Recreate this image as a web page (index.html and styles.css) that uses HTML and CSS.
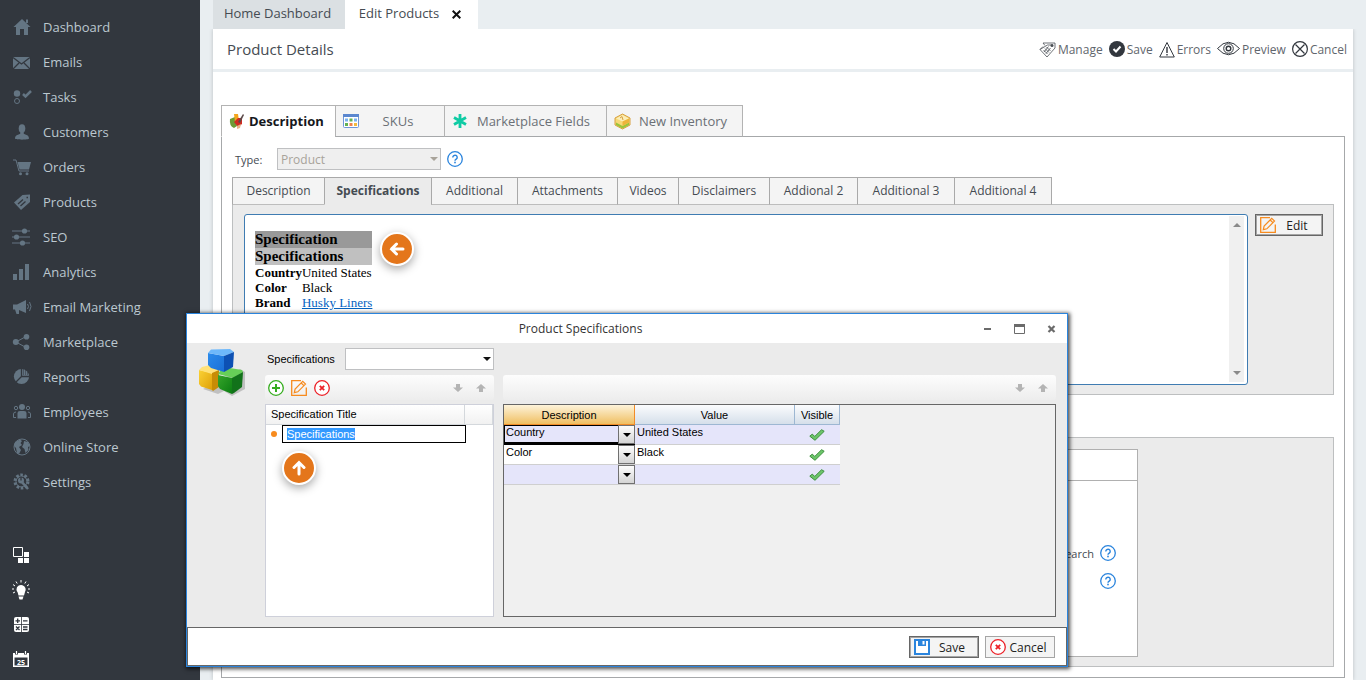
FILE: index.html
```html
<!DOCTYPE html>
<html lang="en">
<head>
    <meta charset="UTF-8">
    <title>Edit Products</title>
    <link rel="stylesheet" href="styles.css">
</head>
<body>

<!-- shared icons -->
<svg class="sprite" width="0" height="0">
    <symbol id="help" viewBox="0 0 16 16">
        <circle cx="8" cy="8" r="7.3" fill="#fff" stroke="#2a84dd" stroke-width="1.3"/>
        <path d="M5.8 6.4a2.2 2.1 0 1 1 3.4 1.7c-.8.5-1.2.8-1.2 1.7" fill="none" stroke="#2a84dd" stroke-width="1.4"/>
        <rect x="7.2" y="10.7" width="1.6" height="1.6" fill="#2a84dd"/>
    </symbol>
    <symbol id="pencil" viewBox="0 0 16 16">
        <path d="M10 .7H.7v14.6h14.6V7.5" fill="none" stroke="#f78b1e" stroke-width="1.3"/>
        <path d="M3.3 12.7l.8-3.6 7.6-7.7 2.8 2.7-7.7 7.7zM10.2 3l2.7 2.7" fill="none" stroke="#f78b1e" stroke-width="1.2"/>
    </symbol>
    <symbol id="remove" viewBox="0 0 16 16">
        <circle cx="8" cy="8" r="7.3" fill="#fff" stroke="#ec2027" stroke-width="1.3"/>
        <path d="M5.8 5.8l4.400 4.400M10.200 5.800l-4.400 4.400" stroke="#ec2027" stroke-width="1.8"/>
    </symbol>
    <symbol id="down" viewBox="0 0 10 8">
        <path d="M3 0h4v3.5h3L5 8 0 3.5h3z" fill="#b4b4b4"/>
    </symbol>
    <symbol id="up" viewBox="0 0 10 8">
        <path d="M3 8h4V4.5h3L5 0 0 4.5h3z" fill="#b4b4b4"/>
    </symbol>
    <symbol id="check" viewBox="0 0 16 12">
        <path d="M.8 7.2l2.400-2 2.600 2.200L12.600.700l2.600 1.600L6 11.300z" fill="#6cc46a" stroke="#3b8f3d" stroke-width="1"/>
    </symbol>
</svg>

<aside class="sidebar">
    <nav class="menu">
        <a href="#"><svg width="20" height="18" viewBox="0 0 20 18"><path d="M10 1l8.500 8H16v8h-4v-6H8v6H4V9H1.500zM14 1.500h2V5h-2z"/></svg>Dashboard</a>
        <a href="#"><svg width="20" height="18" viewBox="0 0 20 18"><path d="M1 4h17v12H1z"/><path class="cut" d="M1 4.500l8.500 6.500L18 4.500M1 16l6-6M18 16l-6-6"/></svg>Emails</a>
        <a href="#"><svg width="20" height="18" viewBox="0 0 20 18"><circle cx="5" cy="5.500" r="3.200"/><circle class="line" cx="5" cy="13" r="2.500"/><path class="thick" d="M11 6l2.500 2.500L19 3"/></svg>Tasks</a>
        <a href="#"><svg width="20" height="18" viewBox="0 0 20 18"><ellipse cx="10" cy="5.500" rx="3.300" ry="4.300"/><path d="M8.300 8h3.400v3H8.300z"/><path d="M3 15.500c0-4 4-3.500 5.500-5h3c1.500 1.500 5.500 1 5.500 5 0 1.500-14 1.500-14 0z"/></svg>Customers</a>
        <a href="#"><svg width="20" height="18" viewBox="0 0 20 18"><path class="line" d="M1 2h3l3 11h10"/><path d="M5.500 4H19l-2 7.500H7.500z"/><circle cx="8.500" cy="15.800" r="1.500"/><circle cx="15" cy="15.800" r="1.500"/></svg>Orders</a>
        <a href="#"><svg width="20" height="18" viewBox="0 0 20 18"><path d="M2 9.500L10.500 2 18 1.500V9l-9 8z"/><path class="cut" d="M6 11l5-4.500M8.500 13l5-4.500M14.500 4.500h1.500"/></svg>Products</a>
        <a href="#"><svg width="20" height="18" viewBox="0 0 20 18"><path class="line" d="M0 3h18M0 9h18M0 15h18"/><circle cx="12.500" cy="3" r="2.600"/><circle cx="4.500" cy="9" r="2.600"/><circle cx="10.500" cy="15" r="2.600"/></svg>SEO</a>
        <a href="#"><svg width="20" height="18" viewBox="0 0 20 18"><path d="M1 11h4v6H1zM7 6h4v11H7zM13 1h4v16h-4z"/></svg>Analytics</a>
        <a href="#"><svg width="20" height="18" viewBox="0 0 20 18"><path d="M1 6.500h4L14 2v13l-7-3v4H4.500L3 11.500H1z"/><path class="line" d="M15.500 6q2 2.500 0 5M17.500 4q3 4.500 0 9"/></svg>Email Marketing</a>
        <a href="#"><svg width="20" height="18" viewBox="0 0 20 18"><path class="line" d="M14 3.500L4 9l10 5.500"/><circle cx="3.800" cy="9" r="3"/><circle cx="14.500" cy="3.800" r="2.800"/><circle cx="14.500" cy="14.200" r="2.800"/></svg>Marketplace</a>
        <a href="#"><svg width="20" height="18" viewBox="0 0 20 18"><circle cx="9.500" cy="8.500" r="7.600"/><path class="cut" d="M9.500 1v7.500H17M9.500 8.500L4 14"/><path class="cut dots" d="M11 4h5M11 6h6M11 2h3"/></svg>Reports</a>
        <a href="#"><svg width="20" height="18" viewBox="0 0 20 18"><circle cx="10" cy="4" r="3"/><path d="M5.500 15.500V10q0-2 2.500-2h4q2.500 0 2.500 2v5.500z"/><circle class="line" cx="4" cy="5" r="1.700"/><circle class="line" cx="16" cy="5" r="1.700"/><path class="line" d="M4 14.500H1.500V11q0-2 2.500-2M16 14.500h2.500V11q0-2-2.500-2"/></svg>Employees</a>
        <a href="#"><svg width="20" height="18" viewBox="0 0 20 18"><circle class="line" cx="10" cy="9" r="8"/><path d="M3 4l5-2.500 2 1.500-1.500 2L10 7 7 9l2 3-2 4-2-1-1-5-2-2zM12 3l4 1 2 4-2 1 .500 3-3 3-1-4-2.500-2 1.500-3z"/></svg>Online Store</a>
        <a href="#"><svg width="20" height="18" viewBox="0 0 20 18"><circle class="gear" cx="9.500" cy="8.500" r="6.500"/><circle class="line" cx="9.500" cy="8.500" r="5.500"/><path class="thick" d="M9 8l7 8"/><circle cx="9" cy="7.500" r="3"/><path class="cut" d="M9 7.500V3.500"/></svg>Settings</a>
    </nav>
    <div class="tools">
        <a href="#" aria-label="Windows"><svg width="20" height="20" viewBox="0 0 20 20"><path d="M1.500 2.500h9v9h-9z" fill="none" stroke="#fff"/><path d="M12 7h5v5h-5zM6 13h5v5H6zM12 13h5v5h-5z" fill="#fff"/></svg></a>
        <a href="#" aria-label="Tips"><svg width="20" height="20" viewBox="0 0 20 20"><path d="M4.500 9.500a4.600 4.600 0 1 1 8.500 2.500l-1 3.500H6.500l-1-3.500q-1-1-1-2.500zM6.500 16.500h5l-1 3h-3z" fill="#fff"/><path d="M0 9h2M16 9h2M9 0v2.500M4 1.500l1.200 2M14 1.500l-1.200 2M1 4.500L3 6M17 4.500L15 6M1 13l2-1M17 13l-2-1" stroke="#fff"/></svg></a>
        <a href="#" aria-label="Calculator"><svg width="20" height="20" viewBox="0 0 20 20"><rect x="2" y="2" width="15" height="15" rx="2" fill="#fff"/><path d="M9.500 2v15M2 9.500h15" stroke="#32373e" stroke-width=".8"/><path d="M3.500 5.800h4.500M5.700 3.500V8M11 5.800h4.500M4 11.500l3.500 3.500M7.500 11.500L4 15M11 12h4.500M11 14.500h4.500" stroke="#32373e" stroke-width="1.300"/></svg></a>
        <a href="#" aria-label="Calendar"><svg width="20" height="20" viewBox="0 0 20 20"><path d="M1 3h16v14H1z" fill="#fff"/><path d="M2.500 7.500h13v8h-13z" fill="#32373e"/><path d="M4.500 1v3.500M13.500 1v3.500" stroke="#32373e" stroke-width="3"/><path d="M4.500 1v3M13.500 1v3" stroke="#fff" stroke-width="1.200"/><text x="9" y="14.500" text-anchor="middle" class="day">25</text></svg></a>
    </div>
</aside>

<main class="main">
    <div class="page-tabs">
        <a href="#" class="page-tab">Home Dashboard</a>
        <a href="#" class="page-tab active">Edit Products
            <svg width="9" height="9" viewBox="0 0 9 9"><path d="M.700.700l7.600 7.600M8.300.700L.700 8.300" stroke="#111" stroke-width="2"/></svg>
        </a>
    </div>

    <div class="page">
        <header class="page-header">
            <h1>Product Details</h1>
            <div class="actions">
                <button><svg width="17" height="17" viewBox="0 0 17 17"><g fill="none" stroke="#4a4f55" stroke-width=".8"><path d="M1 8.500L4 5.500M4 2h12v5l-8 9-7-7.500L8.500 4H14"/><path d="M4 2l2 2.500"/><path d="M4.500 9l4 4M6 7.500l4 4M7.500 6l4 4M9.500 5.500L5 11M11.500 7L7 12.500"/></g><circle cx="13" cy="4.500" r="1.500" fill="#4a4f55"/></svg>Manage</button>
                <button><svg width="16" height="16" viewBox="0 0 16 16"><circle cx="8" cy="8" r="8" fill="#32373e"/><path d="M4.500 8l2.500 2.500L11.500 5.500" fill="none" stroke="#fff" stroke-width="2"/></svg>Save</button>
                <button><svg width="16" height="17" viewBox="0 0 16 17"><path d="M8 1.500l7.300 14.500H.7z" fill="none" stroke="#32373e"/><path d="M8 6v6M8 13v1.500" stroke="#32373e" stroke-width="1.400"/></svg>Errors</button>
                <button><svg width="23" height="16" viewBox="0 0 23 16"><path d="M.5 7.500Q11.500-5 22.500 7.500 11.500 20 .5 7.500z" fill="none" stroke="#32373e"/><circle cx="11.500" cy="7.500" r="4.800" fill="none" stroke="#32373e"/><circle cx="11.500" cy="7.500" r="2.300" fill="none" stroke="#32373e" stroke-width="1.400"/></svg>Preview</button>
                <button><svg width="16" height="16" viewBox="0 0 16 16"><circle cx="8" cy="8" r="7.400" fill="none" stroke="#32373e" stroke-width="1.200"/><path d="M3.500 3.500l9 9M12.500 3.500l-9 9" stroke="#32373e" stroke-width="1.200"/></svg>Cancel</button>
            </div>
        </header>

        <div class="content">
            <div class="main-tabs">
                <a href="#" class="active"><svg width="16" height="16" viewBox="0 0 16 16"><path d="M1 6l5-2 2 9-3 2q-5-2-4-9z" fill="#6d9a36"/><path d="M5 1l4 0 1 7-4 1z" fill="#f4a51c"/><path d="M5 9l4-4 4 0v6l-4 3z" fill="#cf2b22"/><path d="M9 9l5-8 1 1-4 8z" fill="#5b4a4a"/><path d="M8 13l4-2-1 4-3 1z" fill="#e7b588"/></svg>Description</a>
                <a href="#"><svg width="16" height="14" viewBox="0 0 16 14"><rect x=".5" y=".5" width="15" height="13" rx="1" fill="#fff" stroke="#6f96d6"/><path d="M0 0h16v3H0z" fill="#5b87cf"/><path d="M2 4.500h3v3H2z" fill="#7bb2ee"/><path d="M6.500 4.500h3v3h-3zM2 9h3v3H2z" fill="#62b152"/><path d="M11 4.500h3v3h-3z" fill="#7bb2ee"/><path d="M6.500 9h3v3h-3z" fill="#f1824a"/><path d="M11 9h3v3h-3z" fill="#f2ba3e"/></svg><span>SKUs</span></a>
                <a href="#"><svg width="16" height="14" viewBox="0 0 16 14"><path d="M8 0v14M2 3.500l12 7M14 3.500l-12 7" stroke="#0fcba4" stroke-width="2.800"/></svg><span>Marketplace Fields</span></a>
                <a href="#"><svg width="17" height="17" viewBox="0 0 17 17"><path d="M8.500 1L16 5v7l-7.500 4L1 12V5z" fill="#f7d976" stroke="#d7a041"/><path d="M2 9.500l6.500 3.500L15 9.500V12l-6.500 3.500L2 12z" fill="#9bc53a"/><path d="M2 5.500l6.500 3 6.500-3-6.500-3.500z" fill="#fbeeb9"/><path d="M8.500 8.500V13L15 9.500v-4z" fill="#edb43a"/><path d="M6 5l2-1.500L9 7" stroke="#d7a041" fill="none"/></svg><span>New Inventory</span></a>
            </div>

            <section class="main-panel">
                <div class="type-row">
                    <label for="type">Type:</label>
                    <span class="select disabled">
                        <select id="type" disabled><option>Product</option></select>
                    </span>
                    <svg width="16" height="16"><use href="#help"/></svg>
                </div>

                <div class="sub-tabs">
                    <a href="#">Description</a>
                    <a href="#" class="active">Specifications</a>
                    <a href="#">Additional</a>
                    <a href="#">Attachments</a>
                    <a href="#">Videos</a>
                    <a href="#">Disclaimers</a>
                    <a href="#">Addional 2</a>
                    <a href="#">Additional 3</a>
                    <a href="#">Additional 4</a>
                </div>

                <div class="panel sub-panel">
                    <div class="editor">
                        <div class="document">
                            <table>
                                <tr class="group"><th colspan="2">Specification</th></tr>
                                <tr class="title"><th colspan="2">Specifications</th></tr>
                                <tr><th>Country</th><td>United States</td></tr>
                                <tr><th>Color</th><td>Black</td></tr>
                                <tr><th>Brand</th><td><a href="#">Husky Liners</a></td></tr>
                            </table>
                            <span class="marker marker-left"><svg width="16" height="14" viewBox="0 0 16 14"><path d="M14 7H2.500M7.500 2L2.500 7l5 5"/></svg></span>
                        </div>
                        <div class="scrollbar">
                            <i class="arrow-up"></i>
                            <i class="arrow-down"></i>
                        </div>
                    </div>
                    <button class="btn default edit"><svg width="16" height="16"><use href="#pencil"/></svg><span>Edit</span></button>
                </div>

                <div class="panel lower-panel">
                    <div class="card">
                        <div class="card-head"></div>
                        <div class="card-body">
                            <div class="card-row">Search<svg width="16" height="16"><use href="#help"/></svg></div>
                            <div class="card-row"><svg width="16" height="16"><use href="#help"/></svg></div>
                        </div>
                    </div>
                </div>
            </section>
        </div>
    </div>
</main>

<div class="dialog" role="dialog" aria-labelledby="dialog-title">
    <div class="dialog-bar">
        <h2 id="dialog-title">Product Specifications</h2>
        <div class="window-buttons">
            <button aria-label="Minimize"><svg width="11" height="10" viewBox="0 0 11 10"><path d="M2 5h7" stroke="#6b6b6b" stroke-width="2"/></svg></button>
            <button aria-label="Maximize"><svg width="11" height="10" viewBox="0 0 11 10"><path d="M.5.500h10v9H.500z" fill="none" stroke="#6b6b6b"/><path d="M0 0h11v3H0z" fill="#6b6b6b"/></svg></button>
            <button aria-label="Close"><svg width="11" height="10" viewBox="0 0 11 10"><path d="M2.500 2l6 6M8.500 2l-6 6" stroke="#6b6b6b" stroke-width="2.200"/></svg></button>
        </div>
    </div>

    <div class="dialog-body">
        <svg class="cubes" width="48" height="48" viewBox="0 0 48 48">
            <defs>
                <linearGradient id="blue" x2="1" y2="1"><stop offset="0" stop-color="#2b8bec"/><stop offset="1" stop-color="#1a6fd6"/></linearGradient>
                <linearGradient id="yellow" x2="1" y2="1"><stop offset="0" stop-color="#fbd235"/><stop offset="1" stop-color="#dea008"/></linearGradient>
                <linearGradient id="green" x2="1" y2="1"><stop offset="0" stop-color="#36a52a"/><stop offset="1" stop-color="#0b7d12"/></linearGradient>
            </defs>
            <path d="M5 41l15 5 6-3 8 5 13-7V24l-5-3" fill="#000" opacity=".18"/>
            <path d="M1 22l13 3v17L3 38.500 1 36z" fill="url(#yellow)"/>
            <path d="M1 22l3-3 8-2 9 3v3l-7 3z" fill="#ffe27a"/>
            <path d="M14 25l7-3v17l-6 4-1-1z" fill="#c78c06"/>
            <path d="M20 27l14 3v16L22 41l-2-3z" fill="url(#green)"/>
            <path d="M20 26l2-3 10-3 12 2 1 2-10 6z" fill="#67cf58"/>
            <path d="M34 30l11-6-1 15-8 6-2 1z" fill="#12721a"/>
            <path d="M10 5l16 3v16l-13-4-3-3z" fill="url(#blue)"/>
            <path d="M10 5l3-3.500L32 1l4 3-10 4z" fill="#6db8fb"/>
            <path d="M26 8l10-4-1 15-9 5z" fill="#0d51b4"/>
        </svg>

        <div class="list-column">
            <div class="picker">
                <label for="spec">Specifications</label>
                <span class="select">
                    <select id="spec"><option></option></select>
                </span>
            </div>
            <div class="toolbar">
                <button aria-label="Add"><svg width="16" height="16" viewBox="0 0 16 16"><circle cx="8" cy="8" r="7.300" fill="#fff" stroke="#35ad1e" stroke-width="1.300"/><path d="M8 4v8M4 8h8" stroke="#35ad1e" stroke-width="2"/></svg></button>
                <button aria-label="Edit"><svg width="16" height="16"><use href="#pencil"/></svg></button>
                <button aria-label="Delete"><svg width="16" height="16"><use href="#remove"/></svg></button>
                <button aria-label="Move down" class="push"><svg width="10" height="8"><use href="#down"/></svg></button>
                <button aria-label="Move up"><svg width="10" height="8"><use href="#up"/></svg></button>
            </div>
            <div class="list">
                <div class="list-head"><span>Specification Title</span><span></span></div>
                <div class="list-row">
                    <i class="bullet"></i>
                    <label class="name-box"><input type="text" value="Specifications" aria-label="Specification title"></label>
                </div>
                <span class="marker marker-up"><svg width="14" height="16" viewBox="0 0 14 16"><path d="M7 14V2.500M2 7.500l5-5 5 5"/></svg></span>
            </div>
        </div>

        <div class="grid-column">
            <div class="toolbar">
                <button aria-label="Move down" class="push"><svg width="10" height="8"><use href="#down"/></svg></button>
                <button aria-label="Move up"><svg width="10" height="8"><use href="#up"/></svg></button>
            </div>
            <div class="grid">
                <table>
                    <thead>
                        <tr><th class="sorted">Description</th><th>Value</th><th>Visible</th></tr>
                    </thead>
                    <tbody>
                        <tr>
                            <td class="current"><div class="combo"><span>Country</span><button aria-label="Open"></button></div></td>
                            <td>United States</td>
                            <td class="tick"><svg width="16" height="12"><use href="#check"/></svg></td>
                        </tr>
                        <tr>
                            <td><div class="combo"><span>Color</span><button aria-label="Open"></button></div></td>
                            <td>Black</td>
                            <td class="tick"><svg width="16" height="12"><use href="#check"/></svg></td>
                        </tr>
                        <tr>
                            <td><div class="combo"><span></span><button aria-label="Open"></button></div></td>
                            <td></td>
                            <td class="tick"><svg width="16" height="12"><use href="#check"/></svg></td>
                        </tr>
                    </tbody>
                </table>
            </div>
        </div>
    </div>

    <div class="dialog-footer">
        <button class="btn default"><svg width="16" height="16" viewBox="0 0 16 16"><path d="M1 1h14v14H1z" fill="#fff" stroke="#2a84dd" stroke-width="2"/><path d="M4 1h8v6H4z" fill="#2a84dd"/><path d="M8.500 2h2v3.500h-2z" fill="#fff"/></svg><span>Save</span></button>
        <button class="btn"><svg width="16" height="16"><use href="#remove"/></svg><span>Cancel</span></button>
    </div>
</div>

</body>
</html>
```
FILE: styles.css
```css
* {
    box-sizing: border-box;
}
body {
    background: #e9eef1;
    color: #454b52;
    display: flex;
    font-family: "Open Sans", "Noto Sans", sans-serif;
    font-size: 12px;
    margin: 0;
    min-height: 100vh;
}
a {
    color: inherit;
    text-decoration: none;
}
button {
    background: none;
    border: 0;
    color: inherit;
    font: inherit;
    padding: 0;
}
svg {
    display: block;
    flex: none;
}
.sprite {
    position: absolute;
}

/* sidebar */
.sidebar {
    background: #32373e;
    display: flex;
    flex: 0 0 200px;
    flex-direction: column;
    justify-content: space-between;
    padding: 9px 0 3px 12px;
}
.menu a {
    align-items: center;
    color: #bcc8d0;
    display: flex;
    font-size: 13px;
    font-weight: 500;
    gap: 11px;
    height: 35px;
}
.menu svg {
    fill: #647583;
}
.menu .line, .menu .thick, .menu .cut, .menu .gear {
    fill: none;
    stroke: #647583;
}
.menu .thick {
    stroke-width: 2.5;
}
.menu .cut {
    stroke: #32373e;
    stroke-width: 1.3;
}
.menu .dots {
    stroke-dasharray: 1 1;
    stroke-width: 1;
}
.menu .gear {
    stroke-dasharray: 2.5 1.6;
    stroke-width: 3;
}
.tools a {
    align-items: center;
    display: flex;
    height: 35px;
}
.day {
    fill: #fff;
    font-size: 7px;
    font-weight: bold;
}

/* page */
.main {
    display: flex;
    flex: 1;
    flex-direction: column;
    padding: 0 13px;
}
.page-tabs {
    display: flex;
    font-size: 13px;
    height: 29px;
}
.page-tab {
    align-items: center;
    background: #dbe0e3;
    display: flex;
    justify-content: center;
    padding: 0 3px 3px 0;
    width: 132px;
}
.page-tab.active {
    background: #fff;
    gap: 13px;
    width: 133px;
}
.page-tab svg {
    margin-top: 3px;
}
.page {
    background: #fff;
    box-shadow: 0 0 4px rgba(0, 0, 0, .2);
    clip-path: inset(0 -6px);
    flex: 1;
}
.page-header {
    align-items: center;
    border-bottom: 3px solid #e9eef1;
    display: flex;
    height: 43px;
    justify-content: space-between;
    padding: 0 6px 0 14px;
}
.page-header h1 {
    font-size: 15px;
    font-weight: normal;
    margin: 0;
}
.actions {
    color: #5f666d;
    display: flex;
    gap: 6px;
}
.actions button {
    align-items: center;
    display: flex;
    gap: 2px;
}
.content {
    padding: 33px 8px 2px;
}
.main-tabs {
    display: flex;
    font-size: 13px;
}
.main-tabs a {
    align-items: center;
    background: #f4f4f4;
    border: 1px solid #b3b3b3;
    border-bottom-color: #a6a8aa;
    color: #6b7076;
    display: flex;
    height: 32px;
    margin: 0 -1px -1px 0;
    padding: 0 7px;
    width: 110px;
}
.main-tabs a span {
    flex: 1;
    text-align: center;
}
.main-tabs a.active {
    background: #fff;
    border-bottom-color: #fff;
    color: #15181c;
    font-weight: bold;
    gap: 4px;
    width: 115px;
}
.main-tabs a:nth-child(3) {
    width: 163px;
}
.main-tabs a:nth-child(4) {
    width: 137px;
}
.main-panel {
    border: 1px solid #a6a8aa;
    padding: 11px 10px 10px;
}
.type-row {
    align-items: center;
    display: flex;
    height: 22px;
    padding-left: 3px;
}
.type-row label {
    font-size: 11px;
    width: 42px;
}
.type-row svg {
    margin-left: 6px;
}
.select {
    display: block;
    height: 22px;
    position: relative;
    width: 164px;
}
.select select {
    appearance: none;
    background: #fff;
    border: 1px solid #bfc0c2;
    border-radius: 0;
    font: inherit;
    height: 100%;
    padding: 0 3px;
    width: 100%;
}
.select::after {
    border: 4px solid transparent;
    border-bottom: 0;
    border-top-color: #111;
    content: "";
    position: absolute;
    right: 3px;
    top: 9px;
}
.select.disabled select {
    background: #efefef;
    color: #a8a39a;
    opacity: 1;
}
.select.disabled::after {
    border-top-color: #a8a39a;
}
.sub-tabs {
    display: flex;
    margin-top: 7px;
}
.sub-tabs a {
    background: #f4f4f4;
    border: 1px solid #a9a9a9;
    border-bottom-color: #bdbdbd;
    height: 28px;
    line-height: 26px;
    margin: 0 -1px -1px 0;
    text-align: center;
    width: 98px;
}
.sub-tabs a.active {
    background: #ebebeb;
    border-bottom-color: #ebebeb;
    font-weight: bold;
}
.sub-tabs a:nth-child(1) { width: 93px; }
.sub-tabs a:nth-child(2) { width: 108px; }
.sub-tabs a:nth-child(3) { width: 87px; }
.sub-tabs a:nth-child(4) { width: 101px; }
.sub-tabs a:nth-child(5) { width: 62px; }
.sub-tabs a:nth-child(6) { width: 92px; }
.sub-tabs a:nth-child(7) { width: 89px; }
.panel {
    background: #ebebeb;
    border: 1px solid #bdbfc0;
    padding: 9px 10px 9px 11px;
}
.sub-panel {
    align-items: flex-start;
    display: flex;
    gap: 7px;
}
.editor {
    background: #fff;
    border: 1px solid #3f7cb2;
    border-radius: 3px;
    display: flex;
    flex: 1;
    height: 171px;
}
.document {
    color: #000;
    flex: 1;
    font-family: "Liberation Serif", serif;
    font-size: 13px;
    line-height: 15px;
    padding: 16px 10px;
    position: relative;
}
.document table {
    border-collapse: collapse;
}
.document td, .document th {
    padding: 0;
    text-align: left;
}
.document .group, .document .title {
    font-size: 15px;
    line-height: 17px;
}
.document .group {
    background: #999;
}
.document .title {
    background: #c0c0c0;
}
.document a {
    color: #0563c1;
    text-decoration: underline;
}
.scrollbar {
    align-items: center;
    background: #f0f0f0;
    display: flex;
    flex-direction: column;
    justify-content: space-between;
    margin: 1px 3px 2px 0;
    padding: 7px 0;
    width: 15px;
}
.arrow-up, .arrow-down {
    border: 4px solid transparent;
}
.arrow-up {
    border-bottom-color: #8a8a8a;
    border-top: 0;
}
.arrow-down {
    border-bottom: 0;
    border-top-color: #8a8a8a;
}
.marker {
    align-items: center;
    background: #e4761b;
    border: 2px solid #fff;
    border-radius: 50%;
    box-shadow: 0 3px 10px rgba(0, 0, 0, .35);
    display: flex;
    height: 34px;
    justify-content: center;
    position: absolute;
    width: 34px;
}
.marker path {
    fill: none;
    stroke: #fff;
    stroke-linecap: round;
    stroke-width: 3;
}
.marker-left {
    left: 135px;
    top: 17px;
}
.marker-up {
    left: 16px;
    top: 46px;
}
.btn {
    align-items: center;
    background: #f4f4f4;
    border: 1px solid #a5a5a5;
    color: #222;
    display: flex;
    height: 22px;
    padding: 0 4px;
    width: 70px;
}
.btn span {
    flex: 1;
    text-align: center;
}
.btn.default {
    border-color: #666;
    box-shadow: inset 0 0 0 1px #a5a5a5;
}
.btn.edit {
    width: 68px;
}
.lower-panel {
    margin-top: 42px;
    padding-top: 11px;
}
.card {
    background: #fff;
    border: 1px solid #b0b0b0;
    margin-right: 185px;
}
.card-head {
    border-bottom: 1px solid #b0b0b0;
    height: 31px;
}
.card-body {
    font-size: 11px;
    padding: 58px 21px 61px;
}
.card-row {
    align-items: center;
    display: flex;
    gap: 6px;
    height: 28px;
    justify-content: flex-end;
}

/* dialog */
.dialog {
    background: #ebebeb;
    border: 1px solid #2a84dd;
    box-shadow: 1px 1px 4px 1px rgba(0, 0, 0, .7);
    color: #000;
    left: 186px;
    position: absolute;
    right: 298px;
    top: 313px;
}
.dialog-bar {
    align-items: center;
    background: #fff;
    display: flex;
    height: 29px;
}
.dialog-bar h2 {
    color: #333;
    flex: 1;
    font-size: 12px;
    font-weight: normal;
    margin: 0;
    padding-right: 8px;
    text-align: center;
}
.window-buttons {
    display: flex;
    gap: 21px;
    padding-right: 10px;
}
.dialog-body {
    display: flex;
    font-family: "Liberation Sans", sans-serif;
    font-size: 11px;
    padding: 5px 11px 10px;
}
.cubes {
    margin-right: 19px;
}
.list-column {
    display: flex;
    flex: 0 0 229px;
    flex-direction: column;
    margin-right: 9px;
}
.picker {
    align-items: center;
    display: flex;
    justify-content: space-between;
    margin-bottom: 5px;
    padding-left: 2px;
}
.picker .select {
    width: 149px;
}
.toolbar {
    align-items: center;
    background: linear-gradient(#fdfdfd, #ededed);
    border-radius: 3px;
    display: flex;
    gap: 7px;
    height: 25px;
    margin-bottom: 4px;
    padding: 0 8px 0 3px;
}
.toolbar .push {
    margin: 0 6px 0 auto;
}
.list {
    background: #fff;
    border: 1px solid #ced0da;
    flex: 1;
    position: relative;
}
.list-head {
    display: flex;
    height: 20px;
}
.list-head span {
    background: linear-gradient(#fff, #f1f1f1);
    border-bottom: 1px solid #d4d8dc;
    border-right: 1px solid #d4d8dc;
    flex: 1;
    line-height: 19px;
    padding-left: 5px;
}
.list-head span:first-child {
    flex: 0 0 199px;
}
.list-row {
    align-items: center;
    display: flex;
}
.bullet {
    background: #f78b1e;
    border-radius: 50%;
    height: 6px;
    margin: 0 5px;
    width: 6px;
}
.name-box {
    border: 1px solid #000;
    display: flex;
    height: 18px;
    padding: 2px 4px;
    width: 184px;
}
.name-box input {
    background: #3399ff;
    border: 0;
    color: #fff;
    font: inherit;
    padding: 0;
    width: 68px;
}
.grid-column {
    display: flex;
    flex: 1;
    flex-direction: column;
    padding-top: 27px;
}
.grid {
    background: #f0f0f0;
    border: 1px solid #666;
    height: 213px;
}
.grid table {
    border-collapse: separate;
    border-spacing: 0;
    table-layout: fixed;
    width: 336px;
}
.grid th {
    background: linear-gradient(#fbfcfd, #d5dfea);
    border-bottom: 1px solid #9db7d2;
    border-right: 1px solid #9db7d2;
    font-weight: normal;
    height: 20px;
    padding: 0;
}
.grid th:nth-child(1) {
    width: 131px;
}
.grid th:nth-child(3) {
    width: 45px;
}
.grid th.sorted {
    background: linear-gradient(#fdf3da, #f0bf62);
    border-color: #f28c28;
}
.grid td {
    background: #e5e5fa;
    border-bottom: 1px solid #cfcfcf;
    height: 20px;
    line-height: 14px;
    padding: 0 2px;
    vertical-align: top;
}
.grid td:first-child {
    padding: 0;
}
.grid tr:nth-child(2) td {
    background: #fff;
}
.grid td.current {
    border-bottom-color: #000;
    box-shadow: inset 0 0 0 1px #000, inset 0 -2px #000;
}
.grid td.tick {
    padding: 4px 14px 0;
}
.combo {
    display: flex;
    height: 19px;
    justify-content: space-between;
    padding-left: 2px;
}
.combo button {
    align-items: center;
    background: linear-gradient(#fdfdfd, #d4d4d4);
    border: 1px solid #707070;
    display: flex;
    height: 19px;
    justify-content: center;
    width: 17px;
}
.combo button::after {
    border: 4px solid transparent;
    border-bottom: 0;
    border-top-color: #000;
    content: "";
}
.dialog-footer {
    background: #fff;
    border: 1px solid #666;
    display: flex;
    gap: 6px;
    justify-content: flex-end;
    padding: 8px 11px 7px;
}
```
